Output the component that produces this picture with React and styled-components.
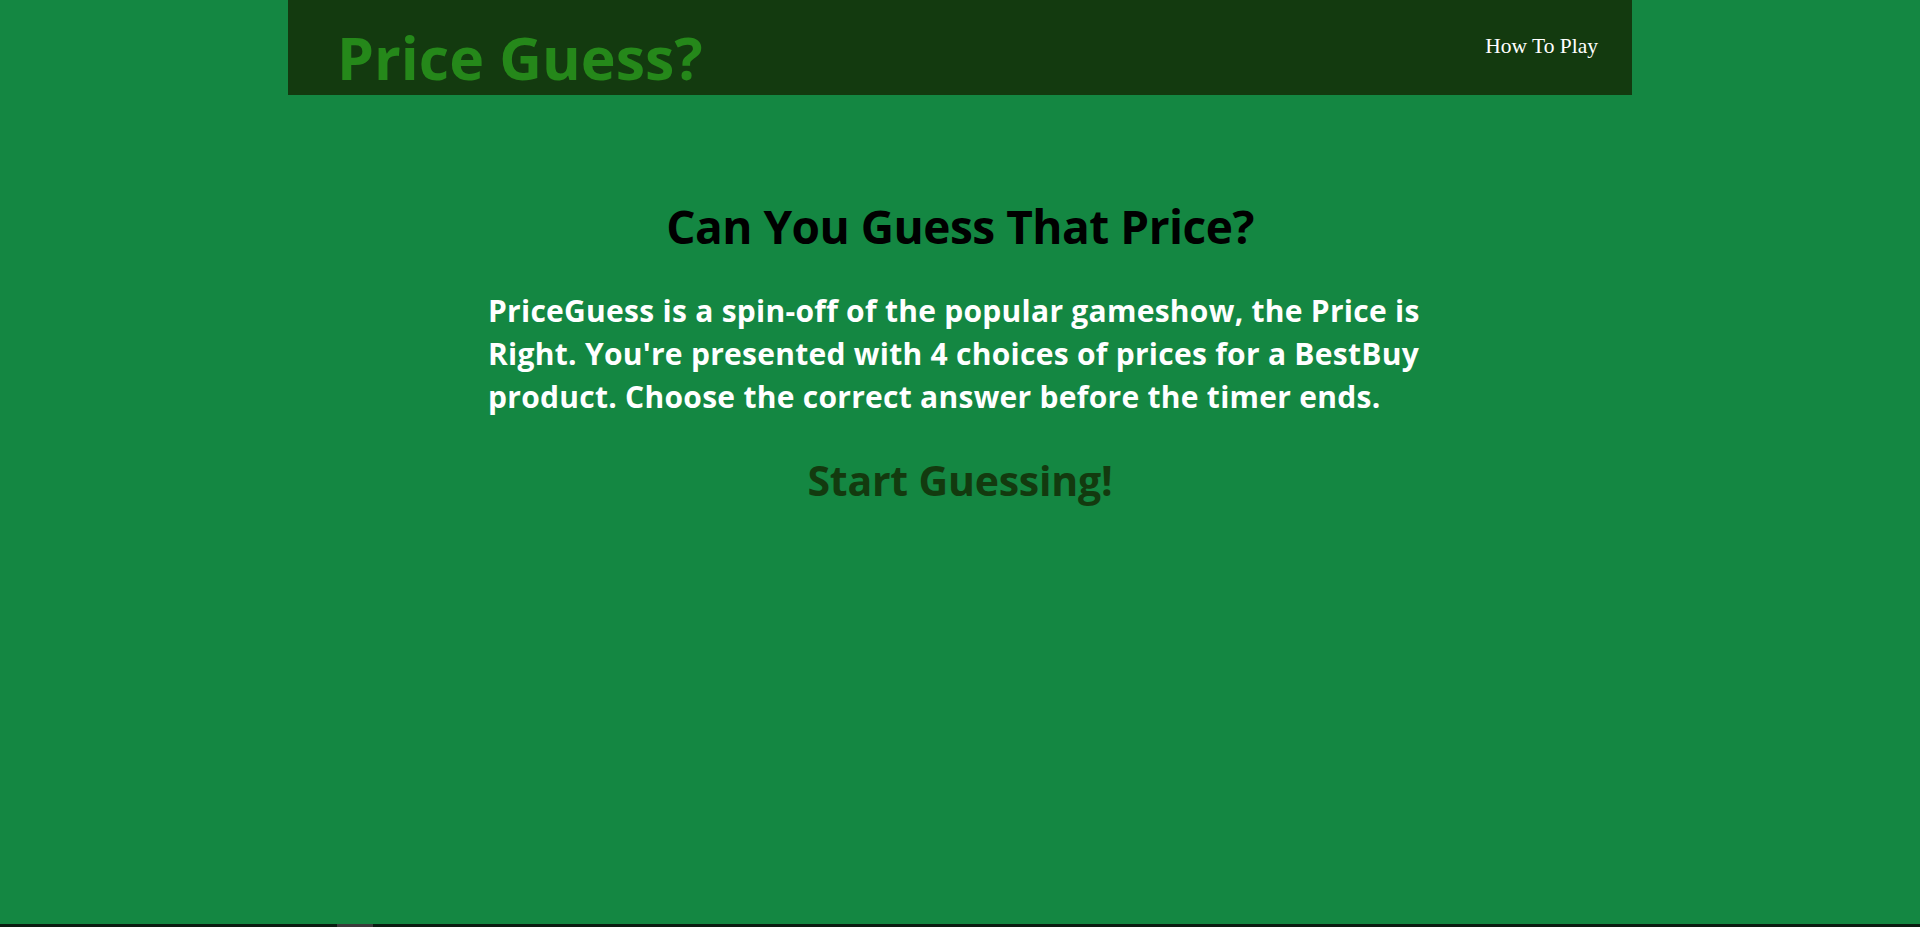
import React from "react";
import styled, { createGlobalStyle } from "styled-components";

const GlobalStyle = createGlobalStyle`
  html, body {
    margin: 0;
    padding: 0;
    background: #148742;
  }
  #root {
    min-height: 100vh;
  }
`;

const Page = styled.div`
  min-height: 100vh;
  display: flex;
  flex-direction: column;
  background: #148742;
`;

const Header = styled.header`
  width: 1344px;
  height: 95px;
  margin: 0 auto;
  box-sizing: border-box;
  background: #133a0f;
  display: flex;
  justify-content: space-between;
  align-items: flex-start;
  padding: 0 34px 0 49px;
`;

const Logo = styled.h1`
  margin: 28px 0 0;
  font-family: "Open Sans", "Noto Sans", sans-serif;
  font-weight: 700;
  font-size: 59px;
  line-height: 59px;
  color: #25881a;
  letter-spacing: 0;
`;

const NavLink = styled.a`
  margin-top: 34px;
  font-family: "Liberation Serif", "Times New Roman", serif;
  font-size: 21.5px;
  line-height: 24px;
  color: #ffffff;
  text-decoration: none;
  cursor: pointer;
`;

const Main = styled.main`
  flex: 1;
  display: flex;
  flex-direction: column;
  align-items: center;
  padding-top: 103px;
`;

const Heading = styled.h2`
  margin: 0;
  font-family: "Open Sans", "Noto Sans", sans-serif;
  font-weight: 700;
  font-size: 46px;
  line-height: 56px;
  color: #000000;
  letter-spacing: -0.5px;
`;

const Intro = styled.p`
  width: 944px;
  margin: 35px 0 0;
  font-family: "Open Sans", "Noto Sans", sans-serif;
  font-weight: 700;
  font-size: 30px;
  line-height: 43px;
  color: #ffffff;
  text-align: left;
  letter-spacing: 0.27px;
`;

const StartButton = styled.button`
  margin-top: 38px;
  padding: 0;
  border: none;
  background: transparent;
  font-family: "Open Sans", "Noto Sans", sans-serif;
  font-weight: 700;
  font-size: 41px;
  line-height: 48px;
  color: #133a0f;
  cursor: pointer;
  letter-spacing: -0.2px;
`;

const ScrollStrip = styled.div`
  height: 3px;
  background: #0b1c11;
  display: flex;
`;

const ScrollThumb = styled.div`
  width: 36px;
  margin-left: 337px;
  background: #3a3a3a;
`;

export default function App() {
  return (
    <>
      <GlobalStyle />
      <Page>
        <Header>
          <Logo>Price Guess?</Logo>
          <NavLink>How To Play</NavLink>
        </Header>
        <Main>
          <Heading>Can You Guess That Price?</Heading>
          <Intro>
            PriceGuess is a spin-off of the popular gameshow, the Price is
            Right. You're presented with 4 choices of prices for a BestBuy
            product. Choose the correct answer before the timer ends.
          </Intro>
          <StartButton>Start Guessing!</StartButton>
        </Main>
        <ScrollStrip>
          <ScrollThumb />
        </ScrollStrip>
      </Page>
    </>
  );
}
